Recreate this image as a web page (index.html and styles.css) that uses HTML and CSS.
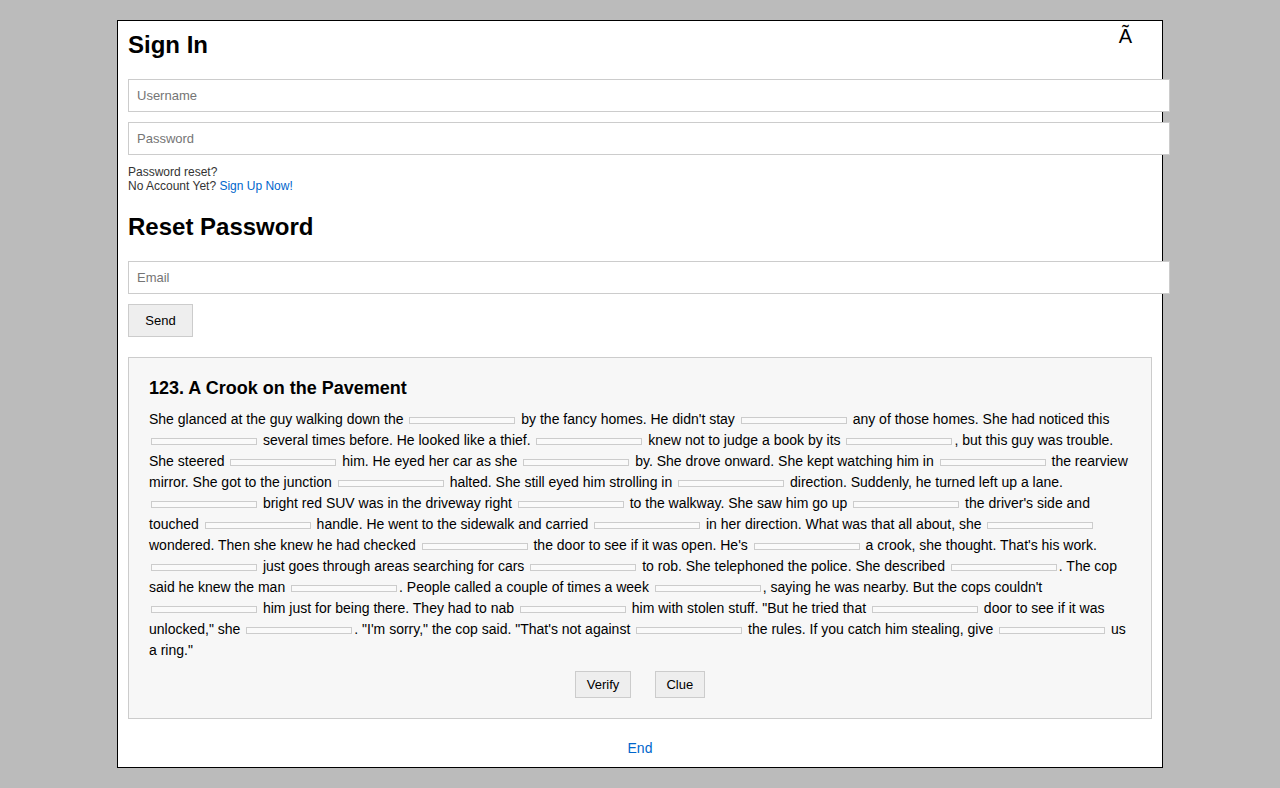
FILE: index.html
```html
<!DOCTYPE html>
<html>
<head>
<meta charset="utf-8">
<link rel="stylesheet" href="styles.css">
</head>
<body>
<div class="page">
  <span class="glyph">Ã</span>
  <h2 class="heading">Sign In</h2>
  <input class="field" type="text" placeholder="Username">
  <input class="field" type="password" placeholder="Password">
  <div class="help">
    <div>Password reset?</div>
    <div>No Account Yet? <a class="link" href="#">Sign Up Now!</a></div>
  </div>
  <h2 class="heading heading-reset">Reset Password</h2>
  <input class="field" type="text" placeholder="Email">
  <button class="btn btn-send">Send</button>

  <div class="story">
    <h3 class="story-title">123. A Crook on the Pavement</h3>
    <p class="story-text">She glanced at the guy walking down the <input class="blank"> by the fancy homes. He didn't stay <input class="blank"> any of those homes. She had noticed this <input class="blank"> several times before. He looked like a thief. <input class="blank"> knew not to judge a book by its <input class="blank">, but this guy was trouble. She steered <input class="blank"> him. He eyed her car as she <input class="blank"> by. She drove onward. She kept watching him in <input class="blank"> the rearview mirror. She got to the junction <input class="blank"> halted. She still eyed him strolling in <input class="blank"> direction. Suddenly, he turned left up a lane. <input class="blank"> bright red SUV was in the driveway right <input class="blank"> to the walkway. She saw him go up <input class="blank"> the driver's side and touched <input class="blank"> handle. He went to the sidewalk and carried <input class="blank"> in her direction. What was that all about, she <input class="blank"> wondered. Then she knew he had checked <input class="blank"> the door to see if it was open. He's <input class="blank"> a crook, she thought. That's his work. <input class="blank"> just goes through areas searching for cars <input class="blank"> to rob. She telephoned the police. She described <input class="blank">. The cop said he knew the man <input class="blank">. People called a couple of times a week <input class="blank">, saying he was nearby. But the cops couldn't <input class="blank"> him just for being there. They had to nab <input class="blank"> him with stolen stuff. "But he tried that <input class="blank"> door to see if it was unlocked," she <input class="blank">. "I'm sorry," the cop said. "That's not against <input class="blank"> the rules. If you catch him stealing, give <input class="blank"> us a ring."</p>
    <div class="story-actions">
      <button class="btn btn-small">Verify</button>
      <button class="btn btn-small">Clue</button>
    </div>
  </div>

  <div class="footer"><a class="link link-end" href="#">End</a></div>
</div>
</body>
</html>
```

FILE: styles.css
```css
html, body {
  margin: 0;
  padding: 0;
}

body {
  background: #bbbbbb;
  font-family: "Liberation Sans", Arial, Helvetica, sans-serif;
  color: #000;
}

.page {
  position: relative;
  width: 1024px;
  margin: 20px auto;
  padding: 10px;
  background: #fff;
  border: 1px solid #000;
}

.glyph {
  position: absolute;
  top: 4px;
  right: 30px;
  font-size: 20px;
  line-height: 23px;
}

.heading {
  margin: 0 0 20px;
  font-size: 24px;
  line-height: 28px;
  font-weight: bold;
}

.heading-reset {
  margin-top: 20px;
}

.field {
  display: block;
  width: 1024px;
  margin: 0 0 10px;
  padding: 8px;
  font-family: "Liberation Sans", Arial, sans-serif;
  font-size: 13px;
  line-height: 15px;
  height: 15px;
  border: 1px solid #cccccc;
  background: #fff;
  outline: none;
}

.field::placeholder {
  color: #757575;
}

.help {
  font-size: 12px;
  line-height: 14px;
  color: #333;
}

.link {
  color: #0066cc;
  text-decoration: none;
}

.btn {
  font-family: "Liberation Sans", Arial, sans-serif;
  font-size: 13px;
  line-height: 15px;
  background: #eeeeee;
  border: 1px solid #cccccc;
  color: #000;
  border-radius: 0;
}

.btn-send {
  display: block;
  width: 65px;
  padding: 8px 0;
  text-align: center;
}

.story {
  margin-top: 20px;
  padding: 20px;
  background: #f7f7f7;
  border: 1px solid #cccccc;
}

.story-title {
  margin: 0 0 10px;
  font-size: 18px;
  line-height: 21px;
  font-weight: bold;
}

.story-text {
  margin: 0;
  font-size: 14px;
  line-height: 21px;
}

.blank {
  width: 104px;
  height: 5px;
  padding: 0;
  margin: 0 2px;
  border: 1px solid #cccccc;
  background: #fafafa;
  vertical-align: middle;
  font-size: 1px;
}

.story-actions {
  display: flex;
  justify-content: center;
  gap: 24px;
  margin-top: 10px;
}

.btn-small {
  padding: 5px 10.5px;
}

.footer {
  padding-top: 21px;
  text-align: center;
  font-size: 14px;
  line-height: 17px;
}
```
